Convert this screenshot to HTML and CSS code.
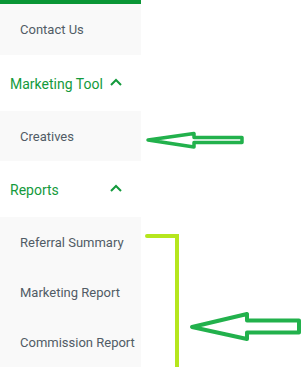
FILE: index.html
```html
<!DOCTYPE html>
<html lang="en">
<head>
    <meta charset="UTF-8">
    <meta name="viewport" content="width=device-width, initial-scale=1.0">
    <title>Sidebar Menu</title>
    <link rel="stylesheet" href="styles.css">
</head>
<body>
    <div class="sidebar">
        <div class="top-bar"></div>
        <a class="sub-item contact-item" href="#">Contact Us</a>
        <div class="menu-header">
            <span>Marketing Tool</span>
            <svg class="chevron" width="12" height="8" viewBox="0 0 12 8"><polyline points="1,7 6,2 11,7" /></svg>
        </div>
        <div class="submenu">
            <a class="sub-item" href="#">Creatives</a>
        </div>
        <div class="menu-header">
            <span>Reports</span>
            <svg class="chevron" width="12" height="8" viewBox="0 0 12 8"><polyline points="1,7 6,2 11,7" /></svg>
        </div>
        <div class="submenu">
            <a class="sub-item" href="#">Referral Summary</a>
            <a class="sub-item" href="#">Marketing Report</a>
            <a class="sub-item" href="#">Commission Report</a>
        </div>
    </div>

    <!-- annotation marks drawn over the screenshot -->
    <svg class="marks" width="301" height="367" viewBox="0 0 301 367">
        <polygon class="arrow thin" points="148,140 194,133.5 194,137.5 242,137.5 242,142.5 194,142.5 194,147" />
        <polygon class="arrow" points="192,327 247,314 247,320.5 299,320.5 299,332.5 247,332.5 247,339" />
        <polyline class="bracket" points="147,236 177,236 177,370" />
    </svg>
</body>
</html>
```

FILE: styles.css
```css
body, html {
    margin: 0;
    padding: 0;
    height: 100%;
    font-family: Roboto, Arial, sans-serif;
    background-color: #fff;
    overflow: hidden;
}
.sidebar {
    width: 141px;
    display: flex;
    flex-direction: column;
}
.top-bar {
    height: 4px;
    background-color: #0a9636;
}
.submenu {
    display: flex;
    flex-direction: column;
    background-color: #f9f9f9;
}
.sub-item {
    display: flex;
    align-items: center;
    height: 50px;
    padding-left: 20px;
    font-size: 13px;
    color: #515c66;
    text-decoration: none;
    background-color: #f9f9f9;
}
.contact-item {
    height: 51px;
}
.menu-header {
    display: flex;
    align-items: center;
    justify-content: space-between;
    height: 56px;
    padding: 2px 19px 0 10px;
    box-sizing: border-box;
    font-size: 14px;
    color: #139a3c;
}
.chevron {
    margin-top: -4px;
}
.chevron polyline {
    fill: none;
    stroke: #139a3c;
    stroke-width: 2;
}
.marks {
    position: absolute;
    top: 0;
    left: 0;
    pointer-events: none;
}
.arrow {
    fill: #fff;
    stroke: #22b14c;
    stroke-width: 4;
    stroke-linejoin: round;
}
.arrow.thin {
    stroke-width: 3.5;
}
.bracket {
    fill: none;
    stroke: #b5e61d;
    stroke-width: 4;
    stroke-linecap: round;
}
```
